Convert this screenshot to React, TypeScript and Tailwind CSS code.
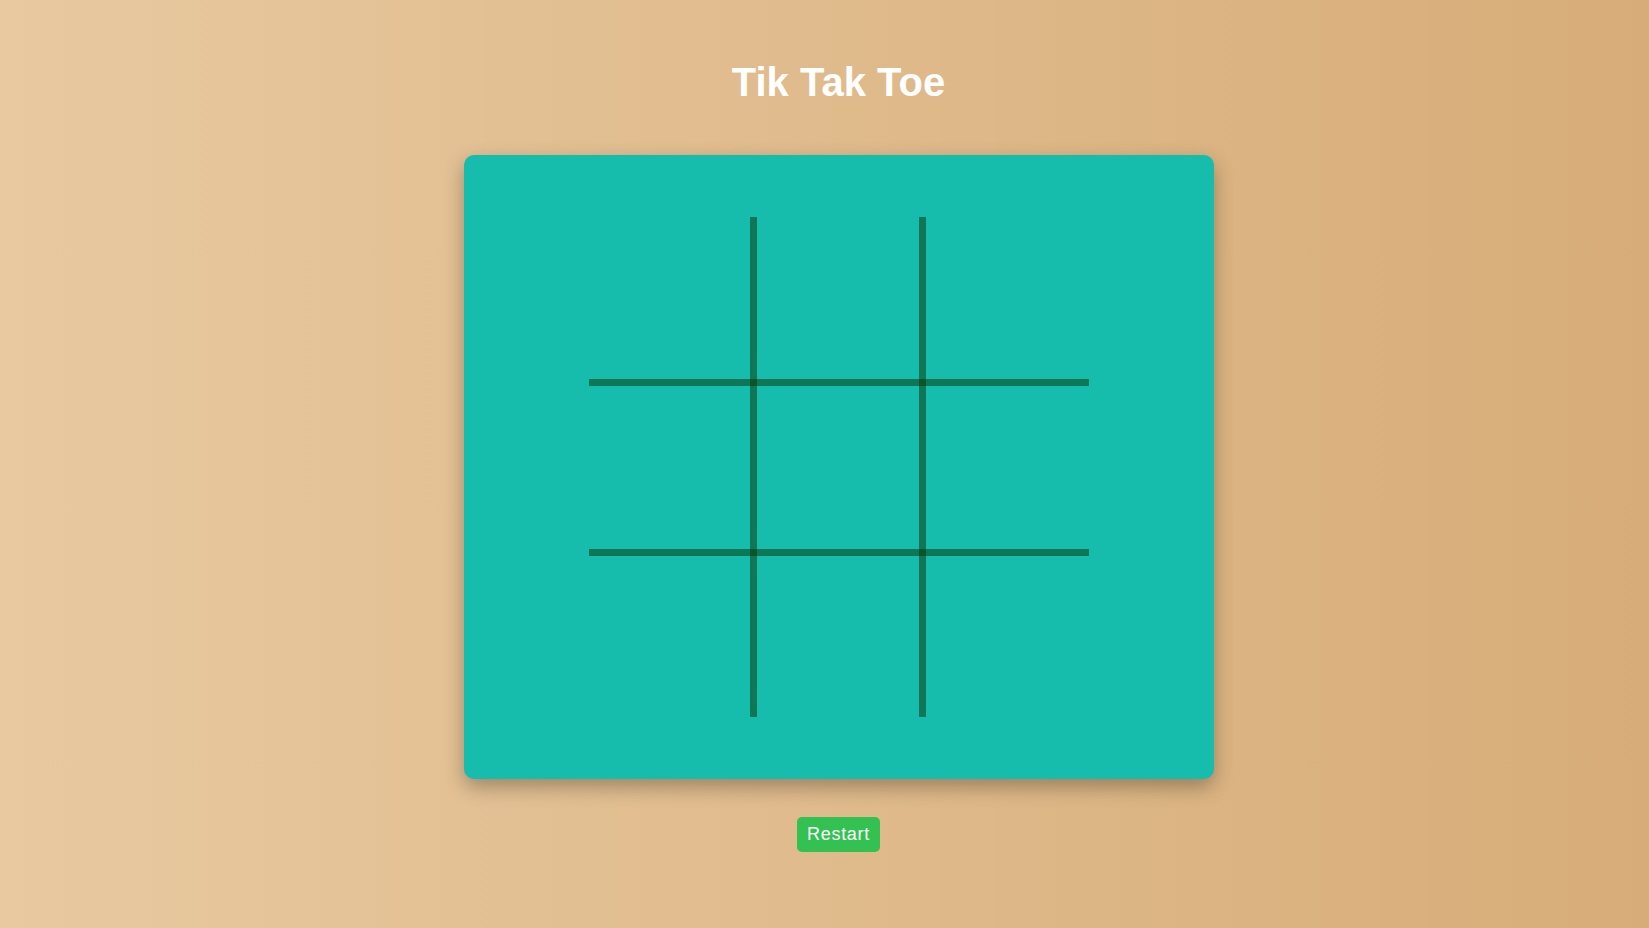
import React, { useState } from "react";

export default function App() {
  const [cells, setCells] = useState<(string | null)[]>(Array(9).fill(null));
  const [xTurn, setXTurn] = useState(true);

  const play = (i: number) => {
    if (cells[i]) return;
    const next = cells.slice();
    next[i] = xTurn ? "X" : "O";
    setCells(next);
    setXTurn(!xTurn);
  };

  const restart = () => {
    setCells(Array(9).fill(null));
    setXTurn(true);
  };

  const lineColor = "rgba(9,49,0,0.5)";

  return (
    <div
      className="min-h-screen w-full flex flex-col items-center pl-[28px] bg-[linear-gradient(to_right,#e8c9a0,#d7ac78)]"
      style={{ fontFamily: '"Liberation Sans", Arial, sans-serif' }}
    >
      <h1 className="mt-[59px] h-[46px] leading-[46px] text-[40px] font-bold text-white">
        Tik Tak Toe
      </h1>
      <div className="mt-[50px] w-[750px] h-[624px] rounded-[10px] bg-[#16bdac] shadow-[0_8px_20px_rgba(0,0,0,0.3)] flex items-center justify-center">
        <div className="relative w-[500px] h-[500px]">
          <div className="grid grid-cols-[161px_7px_162px_7px_163px] grid-rows-[162px_7px_163px_7px_161px] w-full h-full">
            {[0, 2, 4].map((r) =>
              [0, 2, 4].map((c) => {
                const i = (r / 2) * 3 + c / 2;
                return (
                  <button
                    key={i}
                    onClick={() => play(i)}
                    className="flex items-center justify-center text-[96px] font-bold text-white"
                    style={{ gridRow: r + 1, gridColumn: c + 1 }}
                  >
                    {cells[i]}
                  </button>
                );
              })
            )}
          </div>
          <svg
            className="absolute inset-0 pointer-events-none"
            width="500"
            height="500"
            viewBox="0 0 500 500"
          >
            <rect x="161" y="0" width="7" height="500" fill={lineColor} />
            <rect x="330" y="0" width="7" height="500" fill={lineColor} />
            <rect x="0" y="162" width="500" height="7" fill={lineColor} />
            <rect x="0" y="332" width="500" height="7" fill={lineColor} />
          </svg>
        </div>
      </div>
      <button
        onClick={restart}
        className="mt-[38px] h-[35px] px-[10px] rounded-[5px] bg-[#33c152] text-white text-[18px] tracking-[0.7px] leading-[23px]"
      >
        Restart
      </button>
    </div>
  );
}
